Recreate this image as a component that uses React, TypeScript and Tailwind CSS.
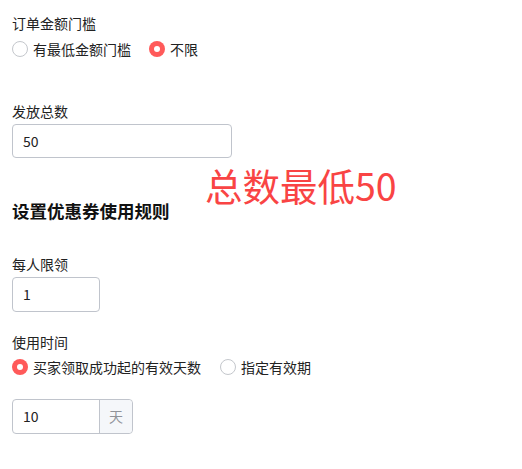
import React from "react";

const font = { fontFamily: '"Noto Sans CJK SC", "Noto Sans", sans-serif' };

function Radio({ checked, label }: { checked: boolean; label: string }) {
  return (
    <label className="flex items-center gap-[5px] cursor-pointer">
      {checked ? (
        <span className="flex h-[16px] w-[16px] items-center justify-center rounded-full bg-[#ff5a5a]">
          <span className="h-[6px] w-[6px] rounded-full bg-white" />
        </span>
      ) : (
        <span className="h-[16px] w-[16px] rounded-full border border-[#c4c7cc] bg-white" />
      )}
      <span className="text-[14px] leading-[20px] text-[#222]">{label}</span>
    </label>
  );
}

export default function App() {
  return (
    <div
      className="relative min-h-[469px] w-[522px] bg-white pl-[12px] pt-[13px] text-[#222]"
      style={font}
    >
      <div className="text-[14px] leading-[20px]">订单金额门槛</div>
      <div className="mt-[6px] flex items-center gap-[18px]">
        <Radio checked={false} label="有最低金额门槛" />
        <Radio checked={true} label="不限" />
      </div>

      <div className="mt-[42px] text-[14px] leading-[20px]">发放总数</div>
      <div className="mt-[3px] flex h-[34px] w-[220px] items-center rounded-[4px] border border-[#c0c4cc] px-[10px] text-[14px]">
        50
      </div>

      <div className="absolute left-[205px] top-[163px] text-[37.5px] leading-[44px] text-[#f94444]">
        总数最低50
      </div>

      <div className="mt-[41px] text-[17.5px] font-bold leading-[24px] text-[#111]">
        设置优惠券使用规则
      </div>

      <div className="mt-[31px] text-[14px] leading-[20px]">每人限领</div>
      <div className="mt-[3px] flex h-[35px] w-[88px] items-center rounded-[4px] border border-[#c0c4cc] px-[10px] text-[14px]">
        1
      </div>

      <div className="mt-[20px] text-[14px] leading-[20px]">使用时间</div>
      <div className="mt-[5px] flex items-center gap-[19px]">
        <Radio checked={true} label="买家领取成功起的有效天数" />
        <Radio checked={false} label="指定有效期" />
      </div>

      <div className="mt-[22px] flex h-[35px] w-[121px] rounded-[4px] border border-[#c0c4cc]">
        <div className="flex flex-1 items-center px-[10px] text-[14px]">10</div>
        <div className="flex w-[33px] items-center justify-center rounded-r-[4px] border-l border-[#c0c4cc] bg-[#f5f7fa] text-[14px] text-[#909399]">
          天
        </div>
      </div>
    </div>
  );
}
